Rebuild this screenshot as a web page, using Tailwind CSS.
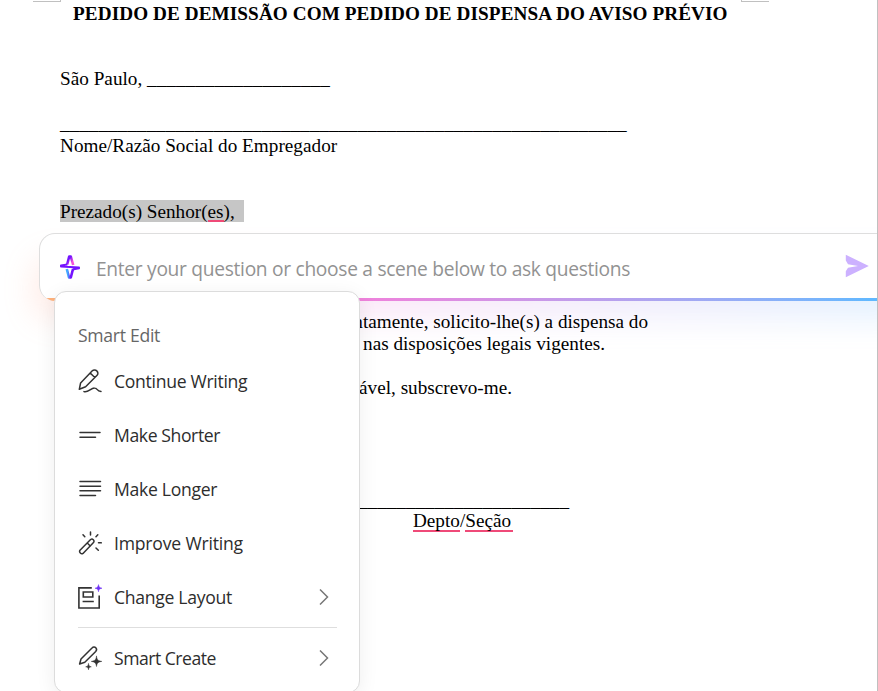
<!DOCTYPE html>
<html lang="pt-BR">
<head>
    <meta charset="UTF-8">
    <meta name="viewport" content="width=device-width, initial-scale=1.0">
    <title>Pedido de Demissão</title>
    <script src="https://cdn.jsdelivr.net/npm/@tailwindcss/browser@4"></script>
</head>
<body class="bg-white overflow-hidden">
    <div class="relative w-[878px] h-[691px] overflow-hidden bg-white border-r border-[#c0c0c0]">
        <!-- Page margin marks -->
        <div class="absolute left-[33px] top-0 w-7 h-0.5 border-b border-r border-[#c0c0c0]"></div>
        <div class="absolute left-[741px] top-0 w-7 h-0.5 border-b border-l border-[#c0c0c0]"></div>

        <!-- Panel glow -->
        <div class="absolute left-[34px] top-[258px] w-[880px] h-[60px] rounded-2xl blur-[16px] opacity-20 bg-linear-to-r from-[#ffa080] via-[#ee88dd] via-35% to-[#66b8ff]"></div>

        <!-- Document -->
        <main class="relative pl-[60px] pt-[3px] text-[19.2px] leading-[22px] text-black whitespace-nowrap font-['Liberation_Serif',serif]">
            <h1 class="pl-[13px] font-bold tracking-[0.09px]">PEDIDO DE DEMISSÃO COM PEDIDO DE DISPENSA DO AVISO PRÉVIO</h1>
            <p class="mt-[43px] tracking-[0.02px]">São Paulo, ___________________</p>
            <p class="mt-[23px] tracking-[0.01px]">___________________________________________________________</p>
            <p class="tracking-[0.02px]">Nome/Razão Social do Empregador</p>
            <p class="mt-[43px]"><span class="block h-[22px] w-[184px] bg-[#c6c6c6] leading-6">Prezado(s) Senhor(<span class="inline-block h-[22px] border-b-2 border-[#ef4a78]">es</span>),</span></p>
            <p class="mt-[89px] w-[588px] flex justify-end">ntamente, solicito-lhe(s) a dispensa do</p>
            <p class="w-[545px] flex justify-end">nas disposições legais vigentes.</p>
            <p class="mt-[22px] w-[452px] flex justify-end">ável, subscrevo-me.</p>
            <p class="mt-[91px] w-[509px] flex justify-end">______________________</p>
            <p class="-mt-0.5 pl-[353px] flex"><span class="h-[22px] border-b-2 border-[#ef4a78]">Depto</span><span>/</span><span class="h-[22px] pr-0.5 border-b-2 border-[#ef4a78]">Seção</span></p>
        </main>

        <!-- Question bar -->
        <div class="absolute left-[39px] top-[233px] w-[860px] h-[68px] rounded-2xl overflow-hidden bg-white border border-b-0 border-[#dedede]">
            <div class="h-16 flex items-center pt-1.5 pl-5">
                <svg class="w-5 h-6 -mt-1" viewBox="0 0 20 24" fill="none" stroke-width="2.6" stroke-linejoin="round">
                    <defs>
                        <linearGradient id="pink" x1="0" y1="0" x2="1" y2="1"><stop offset=".3" stop-color="#7414ff"/><stop offset=".75" stop-color="#f653d8"/></linearGradient>
                        <linearGradient id="blue" x1="1" y1="0" x2="0" y2="0"><stop offset=".4" stop-color="#7414ff"/><stop offset=".85" stop-color="#42aaff"/></linearGradient>
                    </defs>
                    <path d="M7.2 9.5 9.2 1.5 10.8 1.5 13.2 10" stroke="url(#pink)"/>
                    <path d="M6.8 14 9 22.5 10.8 22.5 13 14" stroke="url(#blue)"/>
                    <path d="M7.4 9.4 1 10.6 1 11.6 19 12.6 19 13.2 12.6 14.6" stroke="#7414ff" stroke-width="2"/>
                </svg>
                <span class="ml-4 text-[19.2px] tracking-[-0.3px] leading-7 text-[#929292] whitespace-nowrap font-['Open_Sans',sans-serif]">Enter your question or choose a scene below to ask questions</span>
            </div>
            <div class="h-[3px] bg-linear-to-r from-[#ffb27c] from-2% via-[#ee82dc] via-38% to-[#60b8ff] to-97%"></div>
            <svg class="absolute left-[805px] top-5 w-6 h-6" viewBox="0 0 24 24" fill="#ccb1ff">
                <path d="M.8.8 23.8 12 .8 23.2V17.2L3 13.7 13 12 3 10.3.8 6.5Z"/>
            </svg>
        </div>

        <!-- Smart Edit menu -->
        <div class="absolute left-[54px] top-[291px] w-[306px] h-[402px] rounded-xl bg-white border border-[#dcdcdc] shadow-[0_4px_20px_rgba(0,0,0,0.07)] pl-[23px] pr-[22px] pt-4 text-[17.6px] tracking-[-0.3px] text-[#2d2d2d] whitespace-nowrap font-['Open_Sans',sans-serif]">
            <div class="h-[54px] flex items-center text-[#666]">Smart Edit</div>
            <div class="h-[54px] -mt-2 flex items-center gap-3">
                <svg class="w-6 h-6" viewBox="0 0 24 24" fill="none" stroke="#333" stroke-width="1.5" stroke-linecap="round" stroke-linejoin="round">
                    <path d="M1.3 20.3 2.6 14 14.3 1.8C15.6.5 17.6.7 18.8 1.9 20.1 3.1 20.3 5 19.1 6.3L7.6 17.8ZM12.2 4 16.8 8.5"/>
                    <path d="M6 22.6C10 24 13 18.8 16.5 19 19.5 19 18.5 22 23 22.5"/>
                </svg>
                <span>Continue Writing</span>
            </div>
            <div class="h-[54px] flex items-center gap-3">
                <svg class="w-6 h-6" viewBox="0 0 24 24" fill="none" stroke="#333" stroke-width="1.5" stroke-linecap="round">
                    <path d="M2 9.5H22M2 14.3H17.5"/>
                </svg>
                <span class="tracking-[-0.4px]">Make Shorter</span>
            </div>
            <div class="h-[54px] flex items-center gap-3">
                <svg class="w-6 h-6" viewBox="0 0 24 24" fill="none" stroke="#333" stroke-width="1.5" stroke-linecap="round">
                    <path d="M2 4.5H22.5M2 9.2H22.5M2 13.8H22.5M2 18.5H17.5"/>
                </svg>
                <span>Make Longer</span>
            </div>
            <div class="h-[54px] flex items-center gap-3">
                <svg class="w-6 h-6" viewBox="0 0 24 24" fill="none" stroke="#333" stroke-width="1.5" stroke-linecap="round" stroke-linejoin="round">
                    <path d="M2 19.2 12.6 8.5C14.5 7.2 17 9.3 15.5 11.6L5 22.4C3.2 23.7.7 21.2 2 19.2ZM9.2 12 12.3 15"/>
                    <path d="M12.5 1V4M5 3.8 6.8 5.8M19.8 3.8 18 5.8M20.5 11.8H23.3M18 17 20.3 19.2"/>
                </svg>
                <span class="tracking-[-0.2px]">Improve Writing</span>
            </div>
            <div class="h-[54px] flex items-center gap-3">
                <svg class="w-6 h-6 overflow-visible" viewBox="0 0 24 24" fill="none" stroke="#333" stroke-width="1.6">
                    <path d="M13.8 2.9H.9V23H21.2V10.5"/>
                    <path d="M5.3 7H14.8V12H5.3ZM4.6 16.5H15.8"/>
                    <path d="M20.5-.4C20.9 2.1 21.4 2.6 24 3.2 21.4 3.8 20.9 4.3 20.5 6.8 20 4.3 19.5 3.8 17 3.2 19.5 2.6 20 2.1 20.5-.4Z" fill="#6e32f5" stroke="#6e32f5" stroke-width=".5"/>
                </svg>
                <span>Change Layout</span>
                <svg class="ml-auto mr-[7px] w-3 h-4" viewBox="0 0 12 16" fill="none" stroke="#777" stroke-width="1.5"><path d="M2 .5 9.5 8 2 15.5"/></svg>
            </div>
            <div class="mt-[3px] h-px bg-[#dedede]"></div>
            <div class="mt-[3px] h-[54px] flex items-center gap-3">
                <svg class="w-6 h-6" viewBox="0 0 24 24" fill="none" stroke="#333" stroke-width="1.5" stroke-linecap="round" stroke-linejoin="round">
                    <path d="M1.6 18 3 13 14 2C15.2.7 17 1 17.8 1.8 18.7 2.8 18.8 4.3 17.7 5.5L6.8 16.2Z"/>
                    <path d="M18.5 10.3C19.2 14 19.8 14.7 23.8 15.4 19.8 16.1 19.2 16.8 18.5 20.5 17.8 16.8 17.2 16.1 13.3 15.4 17.2 14.7 17.8 14 18.5 10.3ZM10.5 17.8C10.9 20 11.3 20.4 13.3 20.8 11.3 21.2 10.9 21.6 10.5 23.8 10.1 21.6 9.7 21.2 7.7 20.8 9.7 20.4 10.1 20 10.5 17.8Z" fill="#333" stroke="#333" stroke-width=".5"/>
                </svg>
                <span class="tracking-[-0.5px]">Smart Create</span>
                <svg class="ml-auto mr-[7px] w-3 h-4" viewBox="0 0 12 16" fill="none" stroke="#777" stroke-width="1.5"><path d="M2 .5 9.5 8 2 15.5"/></svg>
            </div>
        </div>
    </div>
</body>
</html>
